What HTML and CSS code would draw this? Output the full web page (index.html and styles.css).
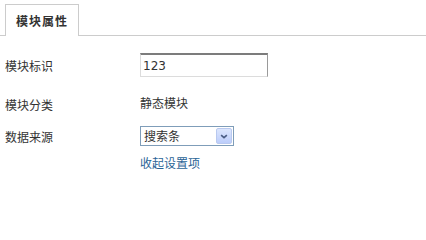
FILE: index.html
```html
<!DOCTYPE html>
<html lang="zh">
<head>
<meta charset="utf-8">
<title>模块属性</title>
<link rel="stylesheet" href="styles.css">
</head>
<body>
<div class="tabs">
  <div class="tab">模块属性</div>
</div>
<div class="form">
  <div class="row row-id">
    <div class="label">模块标识</div>
    <div class="value"><input class="text-input" type="text" value="123"></div>
  </div>
  <div class="row row-type">
    <div class="label">模块分类</div>
    <div class="value static">静态模块</div>
  </div>
  <div class="row row-src">
    <div class="label">数据来源</div>
    <div class="value">
      <div class="select">
        <span class="select-text">搜索条</span>
        <span class="select-btn">
          <svg width="15" height="17" viewBox="0 0 15 17"><path d="M4 7.5 L7.5 10.5 L11 7.5" fill="none" stroke="#4a5d84" stroke-width="2"/></svg>
        </span>
      </div>
    </div>
  </div>
  <div class="row row-link">
    <div class="label"></div>
    <div class="value"><a class="link" href="#">收起设置项</a></div>
  </div>
</div>
</body>
</html>
```

FILE: styles.css
```css
html, body {
  margin: 0;
  padding: 0;
  background: #fff;
}
body {
  font-family: "Noto Sans CJK SC", "DejaVu Sans", sans-serif;
  font-size: 12px;
  color: #333;
}
.tabs {
  padding: 4px 0 0 5px;
  border-bottom: 1px solid #cccccc;
  height: 31px;
  display: flex;
}
.tab {
  box-sizing: border-box;
  width: 74px;
  height: 32px;
  border: 1px solid #cccccc;
  border-bottom: none;
  background: #fff;
  font-weight: bold;
  font-size: 12px;
  line-height: 32px;
  padding-left: 10px;
  color: #333;
  letter-spacing: 1px;
}
.form {
  padding-left: 5px;
  padding-top: 17px;
}
.row {
  display: flex;
  align-items: center;
}
.label {
  width: 135px;
  flex: none;
  line-height: 16px;
}
.value {
  line-height: 16px;
}
.row-id { height: 24px; }
.row-id .label { padding-top: 2px; }
.row-type { height: 24px; margin-top: 14px; }
.row-type .label { padding-top: 3px; }
.row-type .static { padding-bottom: 1px; }
.row-src { height: 20px; margin-top: 11px; }
.row-src .label { padding-top: 2px; }
.row-link { height: 16px; margin-top: 9px; }
.text-input {
  box-sizing: border-box;
  width: 128px;
  height: 24px;
  margin: 0;
  padding: 0 0 0 2px;
  border-style: solid;
  border-width: 2px 1px 1px 1px;
  border-color: #7c7c7c #9a9a9a #dcdcdc #dcdcdc;
  font-family: "DejaVu Sans", sans-serif;
  font-size: 12px;
  color: #333;
  outline: none;
  background: #fff;
}
.select {
  box-sizing: border-box;
  width: 94px;
  height: 20px;
  border: 1px solid #7f9db9;
  display: flex;
  align-items: center;
  justify-content: space-between;
  background: #fff;
}
.select-text {
  padding-left: 3px;
  color: #333;
  line-height: 16px;
}
.select-btn {
  box-sizing: border-box;
  width: 16px;
  height: 16px;
  margin-right: 1px;
  border: 1px solid #b9c9ef;
  border-radius: 2px;
  background: linear-gradient(#dce6fd, #bccdfb);
  display: flex;
  align-items: center;
  justify-content: center;
}
.select-btn svg {
  display: block;
  width: 14px;
  height: 14px;
}
.link {
  color: #2a6496;
  text-decoration: none;
}
```
